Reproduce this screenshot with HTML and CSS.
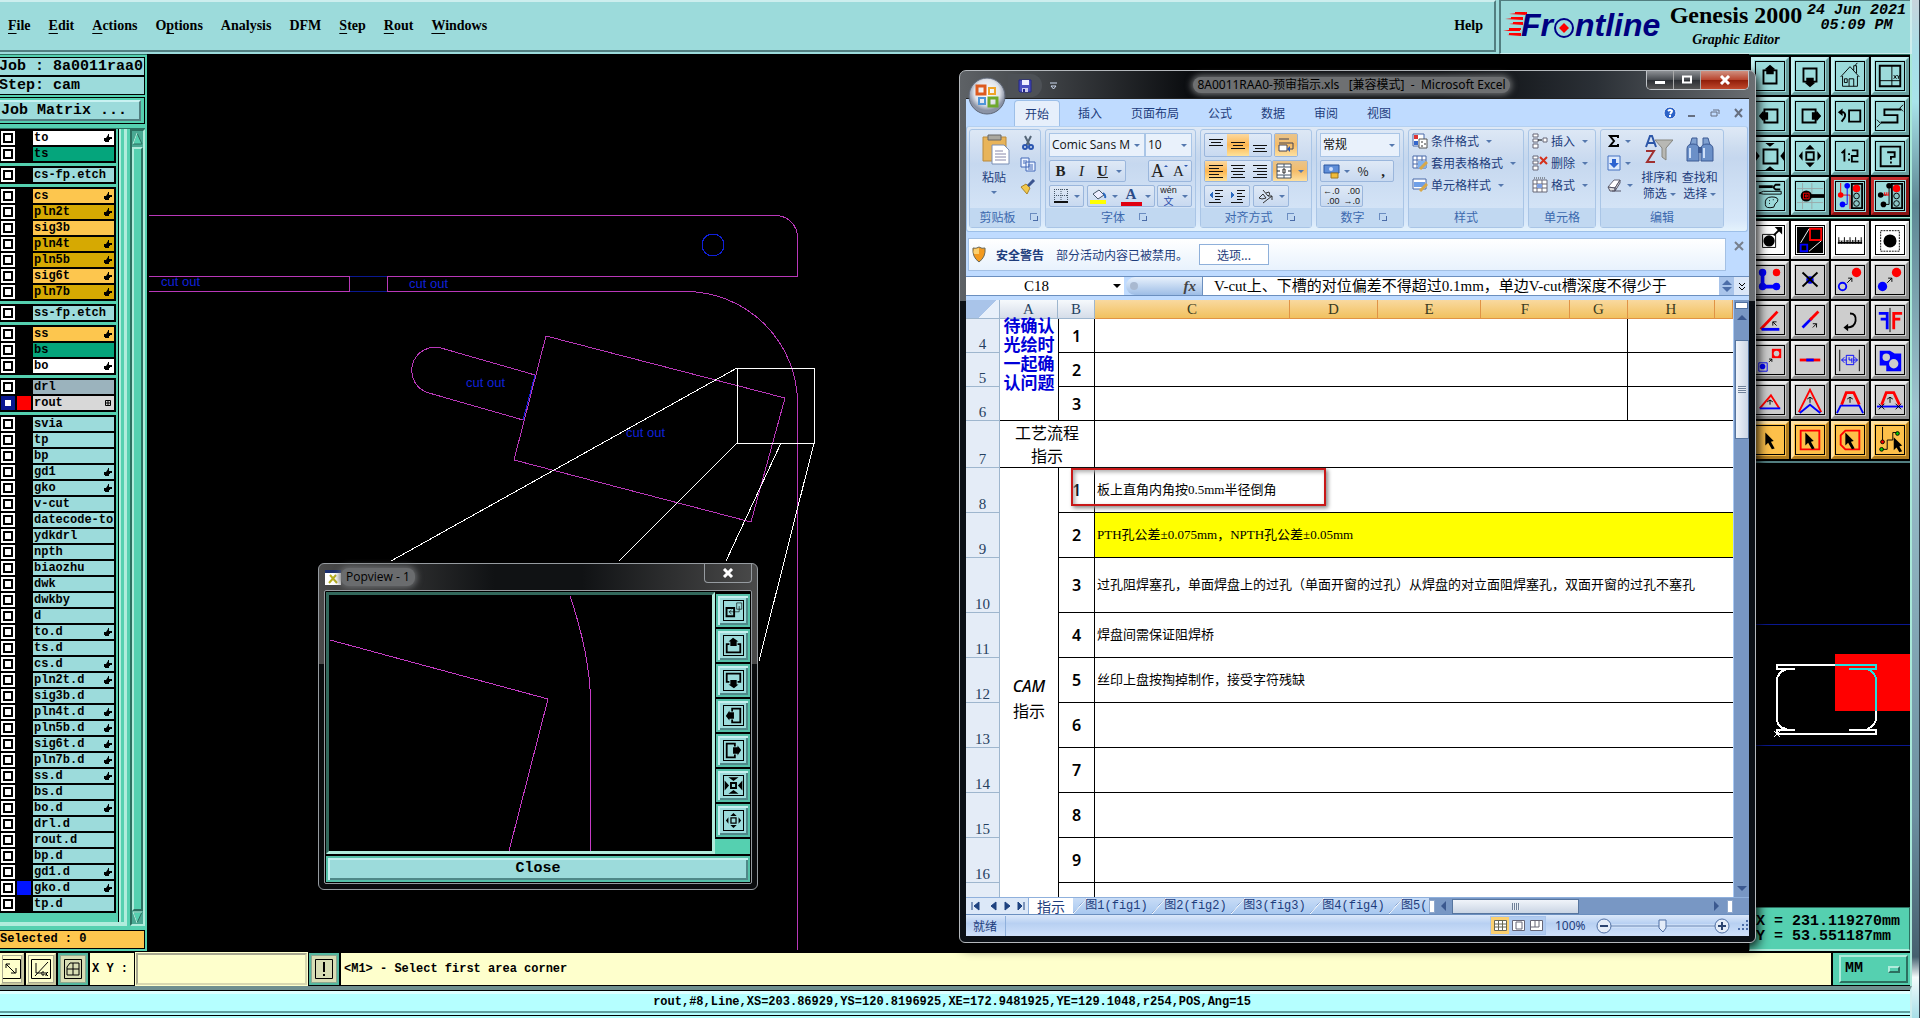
FILE: index.html
```html
<!DOCTYPE html>
<html lang="zh-CN">
<head>
<meta charset="utf-8">
<title>Genesis 2000 Graphic Editor</title>
<link rel="stylesheet" href="styles.css">
</head>
<body>
<svg class="defs" aria-hidden="true">
  <symbol id="hand" viewBox="0 0 8 8"><path d="M0 4h2l2-3V0h1v3h3v2H6v1H5v2H1V7H0z"/></symbol>
  <symbol id="grid4" viewBox="0 0 8 8"><path d="M1.500 1.500h5v5h-5zM1 4h6M4 1v6" fill="none" stroke="#000"/></symbol>
  <symbol id="pan" viewBox="0 0 30 30"><path d="M12 9H8v14h14V9h-4" fill="none" stroke="#000" stroke-width="2"/><path d="M15 3l6 5h-2v5h-8V8H9z"/></symbol>
  <symbol id="panwide" viewBox="0 0 21 21"><path d="M6 9H3v9h15V9h-3" fill="none" stroke="#000" stroke-width="2"/><path d="M10 2l6 4h-2v5H7V6H5z"/></symbol>
  <symbol id="house" viewBox="0 0 30 30"><path d="M5 16L15 5l10 11M7 15v11h16V15M14 26v-8h5v8M9 18h3v4H9zM19 9V4h3v8M21 4c0-3 2-2 2-3" fill="none" stroke="#000"/></symbol>
  <symbol id="winxy" viewBox="0 0 30 30"><path d="M4 4h22v22H4z" fill="none" stroke="#000" stroke-width="2"/><path d="M17 4v22M4 20h22M19 14l3 4m0-4l-3 4M23 14l1 2 2-2m-2 2v2" fill="none" stroke="#000"/></symbol>
  <symbol id="prev" viewBox="0 0 30 30"><path d="M14 9h12v12H14z" fill="none" stroke="#000" stroke-width="2"/><path d="M4 11h4q3 2 1 6l-3 4" fill="none" stroke="#000" stroke-width="2"/><path d="M2 11l5-4v8z"/></symbol>
  <symbol id="snake" viewBox="0 0 30 30"><path d="M27 8H9v6h14v8H5" fill="none" stroke="#000" stroke-width="2"/><path d="M25 7l4-4m-3 4l3 3M1 19l4 4-4 4" fill="none" stroke="#000"/></symbol>
  <symbol id="zoomin" viewBox="0 0 30 30"><path d="M8 8h15v15H8z" fill="none" stroke="#000" stroke-width="2"/><path d="M15 5l-5-4h10zM15 26l-5 4h10zM4 15l-4-5v10zM26 15l4-5v10z"/></symbol>
  <symbol id="shrink" viewBox="0 0 30 30"><path d="M11 11h8v8h-8z" fill="none" stroke="#000" stroke-width="3"/><path d="M15 8l-8-6h16zM15 22l-8 6h16zM8 15L1 7v16zM22 15l7-8v16z"/></symbol>
  <symbol id="zoomout" viewBox="0 0 30 30"><path d="M11 11h8v8h-8z" fill="none" stroke="#000" stroke-width="2"/><path d="M15 3l5 5H10zM15 27l5-5H10zM3 15l4-5v10zM27 15l-4-5v10z"/></symbol>
  <symbol id="onetwo" viewBox="0 0 30 30"><path d="M6 12l3-3v12M14 12v2m0 4v2M17 9h6v6h-6v6h7" fill="none" stroke="#000" stroke-width="2"/></symbol>
  <symbol id="help" viewBox="0 0 30 30"><path d="M5 5h21v21H5z" fill="none" stroke="#000" stroke-width="2"/><path d="M12 11h8v5h-4v3m0 2v2" fill="none" stroke="#000" stroke-width="2"/></symbol>
  <symbol id="tools" viewBox="0 0 30 30"><path d="M3 5h15" stroke="#000" stroke-width="3"/><path d="M26 3h-5q-4 3 0 5h5" fill="none" stroke="#000" stroke-width="2"/><path d="M3 12l5-2h19v3H8zM10 24q-1-8 7-8 8 0 6 5-3 2-4 6-9 2-9-3zM14 20h1m3-1h1m-5 4h1" fill="none" stroke="#000"/></symbol>
  <symbol id="snap" viewBox="0 0 30 30"><path d="M7 1v28M17 1v28M1 7h28M1 22h28" stroke="#9aa9a9"/><circle cx="11" cy="15" r="6"/><path d="M14 15h16" stroke="#000" stroke-width="4"/><path d="M8 12h6v6H8zM10 14h2v2h-2z" fill="none" stroke="red"/></symbol>
  <symbol id="light" viewBox="0 0 30 30"><path d="M17 2h11v26H17z" fill="#8cc5c5" stroke="#000" stroke-width="2"/><circle cx="22" cy="7" r="4" fill="red"/><circle cx="22" cy="15" r="3" fill="none" stroke="#000"/><circle cx="22" cy="23" r="3" fill="none" stroke="#000"/></symbol>
  <symbol id="net1" viewBox="0 0 30 30"><use href="#light"/><path d="M5 1v13h10v15" fill="none" stroke="red"/><circle cx="5" cy="14" r="3" fill="red"/><path d="M12 4v20H6" fill="none" stroke="#00f"/><circle cx="12" cy="4" r="3" fill="#00f"/><circle cx="7" cy="24" r="3" fill="#00f"/></symbol>
  <symbol id="net2" viewBox="0 0 30 30"><use href="#light"/><path d="M14 4v20H8M5 14h6" fill="none" stroke="#000"/><circle cx="14" cy="4" r="3"/><circle cx="5" cy="14" r="3"/><circle cx="8" cy="24" r="3"/><path d="M9 11v3m2-3v3m2-3v3M9 14h5" stroke="red"/></symbol>
  <symbol id="select1" viewBox="0 0 30 30"><path d="M7 9h14v14H7z" fill="none" stroke="#000"/><circle cx="14" cy="16" r="6"/><path d="M19 10l7-7" stroke="#000" stroke-width="2"/><path d="M20 1h8v8z"/></symbol>
  <symbol id="popv" viewBox="0 0 30 30"><path d="M1 1h28v28H1z"/><path d="M15 3h12v12H15z" fill="none" stroke="red" stroke-width="2"/><path d="M5 20h7v7H5z" fill="none" stroke="#00f" stroke-width="2"/><path d="M5 18L14 3M14 27l13-11" stroke="#fff"/></symbol>
  <symbol id="ruler" viewBox="0 0 30 30"><path d="M3 19V12M6 16v3M9 12v7M12 15v4M15 12v7M18 15v4M21 12v7M24 15v4M27 12v7" stroke="#000"/><path d="M3 16h25" stroke="#000" stroke-dasharray="1 1"/><path d="M2 18h26" stroke="#000" stroke-width="2"/></symbol>
  <symbol id="dashpad" viewBox="0 0 30 30"><path d="M5 5h20v22H5z" fill="none" stroke="#000" stroke-dasharray="2 1"/><circle cx="15" cy="16" r="7"/></symbol>
  <symbol id="chain" viewBox="0 0 30 30"><path d="M7 7v15h15" fill="none" stroke="#00f" stroke-width="4"/><circle cx="7" cy="7" r="4" fill="#00f"/><circle cx="7" cy="22" r="4" fill="#00f"/><circle cx="22" cy="22" r="4" fill="#00f"/><circle cx="22" cy="7" r="4" fill="red"/></symbol>
  <symbol id="del" viewBox="0 0 30 30"><circle cx="15" cy="15" r="4" fill="#00f"/><path d="M7 7l16 15M23 7L7 22" stroke="#000" stroke-width="2"/></symbol>
  <symbol id="copy" viewBox="0 0 30 30"><circle cx="7" cy="22" r="4" fill="none" stroke="#00f" stroke-width="2"/><circle cx="22" cy="7" r="5" fill="red"/><path d="M12 18l5-5m-4 0h4v4" fill="none" stroke="#000"/></symbol>
  <symbol id="move" viewBox="0 0 30 30"><circle cx="7" cy="22" r="5" fill="#00f"/><circle cx="22" cy="7" r="5" fill="red"/><path d="M12 18l5-5m-4 0h4v4" fill="none" stroke="#000"/></symbol>
  <symbol id="rot" viewBox="0 0 30 30"><path d="M5 25L23 6" stroke="red" stroke-width="3"/><path d="M6 25h19" stroke="#00f" stroke-width="3"/><path d="M22 21l-4-4v4m0-4h4" fill="none" stroke="#000"/></symbol>
  <symbol id="stretch" viewBox="0 0 30 30"><path d="M7 23l10-10" stroke="#00f" stroke-width="3"/><path d="M15 15l9-9" stroke="red" stroke-width="3"/><path d="M18 23l4-4m-4 0h4v4" fill="none" stroke="#000"/></symbol>
  <symbol id="turn" viewBox="0 0 30 30"><path d="M15 8q7 0 6 8-1 7-9 7" fill="none" stroke="#000" stroke-width="2"/><path d="M13 19v8l-5-4z"/></symbol>
  <symbol id="mirror" viewBox="0 0 30 30"><path d="M15 2v26" stroke="#000"/><path d="M3 8h9v17M5 14h7" fill="none" stroke="#00f" stroke-width="3"/><path d="M28 8h-9v17M26 14h-7" fill="none" stroke="red" stroke-width="3"/></symbol>
  <symbol id="resize" viewBox="0 0 30 30"><path d="M3 18h9v9H3z" fill="none" stroke="#00f"/><circle cx="7" cy="22" r="3" fill="#00f"/><path d="M17 3h10v10H17z" fill="red"/><circle cx="22" cy="8" r="3" fill="#ccc"/><path d="M14 17l3-3m-3 0h3v3" fill="none" stroke="#000"/></symbol>
  <symbol id="seg" viewBox="0 0 30 30"><path d="M4 15h22" stroke="red" stroke-width="3"/><path d="M11 15h8" stroke="#00f" stroke-width="3"/></symbol>
  <symbol id="space" viewBox="0 0 30 30"><path d="M4 4v23M25 4v23" stroke="#000"/><path d="M11 10h8v10h-8zM6 15h5m8 0h4M9 12l-3 3 3 3M20 12l3 3-3 3M14 12v3h3v-2m0 2v3" fill="none" stroke="#00f"/></symbol>
  <symbol id="shapes" viewBox="0 0 30 30"><path d="M4 5h11l5 3h7v19H11v-6H4z" fill="#00f"/><circle cx="11" cy="12" r="4" fill="#ccc"/><circle cx="19" cy="19" r="5" fill="#ccc"/></symbol>
  <symbol id="tri" viewBox="0 0 30 30"><path d="M4 24L16 10l9 14" fill="none" stroke="red" stroke-width="2"/><path d="M4 24h22" stroke="#00f" stroke-width="2"/><path d="M15 20v-5m-3 2l3-2 3 2" fill="none" stroke="#000"/></symbol>
  <symbol id="tri2" viewBox="0 0 30 30"><path d="M3 28L15 4l12 24" fill="none" stroke="red" stroke-width="2"/><path d="M4 29l11-9 11 9" fill="none" stroke="#00f" stroke-width="2"/><path d="M15 18v-6m-3 2l3-2 3 2" fill="none" stroke="#000"/></symbol>
  <symbol id="trap" viewBox="0 0 30 30"><path d="M6 20l5-13h8l6 13" fill="none" stroke="red" stroke-width="3"/><path d="M1 29l4-8h20l4 8" fill="none" stroke="#00f" stroke-width="2"/><path d="M15 18v-6m-3 2l3-2 3 2" fill="none" stroke="#000"/></symbol>
  <symbol id="trap2" viewBox="0 0 30 30"><path d="M6 20l5-13h8l6 13" fill="none" stroke="red" stroke-width="3"/><path d="M1 22h28" stroke="#00f" stroke-width="2"/><path d="M3 19l6 6m0-6l-6 6M21 19l6 6m0-6l-6 6M15 18v-6m-3 2l3-2 3 2" fill="none" stroke="#000"/></symbol>
  <symbol id="cur" viewBox="0 0 30 30"><path d="M10 7l9 9-3 1 4 7-3 1-4-7-3 3z"/></symbol>
  <symbol id="cur2" viewBox="0 0 30 30"><path d="M5 5h20v20H5z" fill="none" stroke="red" stroke-width="2"/><use href="#cur"/></symbol>
  <symbol id="cur3" viewBox="0 0 30 30"><path d="M10 5h15v20H10l-5-5V10z" fill="none" stroke="red" stroke-width="2"/><use href="#cur"/></symbol>
  <symbol id="cur4" viewBox="0 0 30 30"><path d="M7 1v14M6 25h6V15h6V7h5" fill="none" stroke="#000"/><circle cx="23" cy="8" r="2" fill="#0c0" stroke="#000"/><circle cx="6" cy="25" r="2" fill="#0c0" stroke="#000"/><circle cx="7" cy="17" r="2" fill="red" stroke="#000"/><path d="M19 12l9 9-3 1 3 5-3 1-3-5-3 3z"/></symbol>
  <symbol id="popback" viewBox="0 0 30 30"><path d="M4 11h12v13H4z" fill="none" stroke="#000" stroke-width="3"/><path d="M20 3h8v10h-8zM8 17h16V8M12 14l-4 3 4 4" fill="none" stroke="#000"/></symbol>
</svg>

<div class="desktop">
<div class="app">
  <header class="top">
    <nav class="menubar">
      <a href="#"><u>F</u>ile</a><a href="#"><u>E</u>dit</a><a href="#"><u>A</u>ctions</a><a href="#">O<u>p</u>tions</a><a href="#">Analysis</a><a href="#">DFM</a><a href="#"><u>S</u>tep</a><a href="#"><u>R</u>out</a><a href="#"><u>W</u>indows</a>
      <a class="menu-help" href="#">Help</a>
    </nav>
    <div class="brand">
      <svg class="logo" width="166" height="48" role="img" aria-label="Frontline">
        <path d="M8 13l18-2v3zM4 18l18-2v3zM8 23l14-2v3zM2 30l17-3v3zM6 34l14-2v3z" fill="#f00"/><path d="M14 12h10M10 17h12M12 22h10M8 28h12M8 33h12" stroke="#f00" stroke-width="2"/>
        <text x="20" y="35" class="logo-text">Fr</text><text x="74" y="35" class="logo-text">ntline</text>
        <circle cx="63" cy="27" r="9" fill="none" stroke="#008" stroke-width="2"/><path d="M63 22l5 5-5 5-5-5z" fill="#f00"/>
      </svg>
      <div class="product"><strong>Genesis 2000</strong><em>Graphic Editor</em></div>
      <time class="clock">24 Jun 2021<br>05:09 PM</time>
    </div>
  </header>

  <main class="work">
    <aside class="side">
      <div class="job">Job : 8a0011raa0</div>
      <div class="job">Step: cam</div>
      <div class="matrix"><button type="button">Job Matrix ...</button></div>
      <div class="list">
        <div class="layers">
          <div class="group">
            <label class="layer white"><input type="checkbox"><i></i><span>to</span><svg><use href="#hand"/></svg></label>
            <label class="layer green"><input type="checkbox"><i></i><span>ts</span></label>
          </div>
          <div class="group">
            <label class="layer"><input type="checkbox"><i></i><span>cs-fp.etch</span></label>
          </div>
          <div class="group">
            <label class="layer orange"><input type="checkbox"><i></i><span>cs</span><svg><use href="#hand"/></svg></label>
            <label class="layer gold"><input type="checkbox"><i></i><span>pln2t</span><svg><use href="#hand"/></svg></label>
            <label class="layer orange"><input type="checkbox"><i></i><span>sig3b</span></label>
            <label class="layer gold"><input type="checkbox"><i></i><span>pln4t</span><svg><use href="#hand"/></svg></label>
            <label class="layer gold"><input type="checkbox"><i></i><span>pln5b</span><svg><use href="#hand"/></svg></label>
            <label class="layer orange"><input type="checkbox"><i></i><span>sig6t</span><svg><use href="#hand"/></svg></label>
            <label class="layer gold"><input type="checkbox"><i></i><span>pln7b</span><svg><use href="#hand"/></svg></label>
          </div>
          <div class="group">
            <label class="layer"><input type="checkbox"><i></i><span>ss-fp.etch</span></label>
          </div>
          <div class="group">
            <label class="layer orange"><input type="checkbox"><i></i><span>ss</span><svg><use href="#hand"/></svg></label>
            <label class="layer green"><input type="checkbox"><i></i><span>bs</span></label>
            <label class="layer white"><input type="checkbox"><i></i><span>bo</span><svg><use href="#hand"/></svg></label>
          </div>
          <div class="group">
            <label class="layer steel"><input type="checkbox"><i></i><span>drl</span></label>
            <label class="layer grey"><input type="checkbox" checked><i class="red"></i><span>rout</span><svg><use href="#grid4"/></svg></label>
          </div>
          <div class="group">
            <label class="layer"><input type="checkbox"><i></i><span>svia</span></label>
            <label class="layer"><input type="checkbox"><i></i><span>tp</span></label>
            <label class="layer"><input type="checkbox"><i></i><span>bp</span></label>
            <label class="layer"><input type="checkbox"><i></i><span>gd1</span><svg><use href="#hand"/></svg></label>
            <label class="layer"><input type="checkbox"><i></i><span>gko</span><svg><use href="#hand"/></svg></label>
            <label class="layer"><input type="checkbox"><i></i><span>v-cut</span></label>
            <label class="layer"><input type="checkbox"><i></i><span>datecode-to</span></label>
            <label class="layer"><input type="checkbox"><i></i><span>ydkdrl</span></label>
            <label class="layer"><input type="checkbox"><i></i><span>npth</span></label>
            <label class="layer"><input type="checkbox"><i></i><span>biaozhu</span></label>
            <label class="layer"><input type="checkbox"><i></i><span>dwk</span></label>
            <label class="layer"><input type="checkbox"><i></i><span>dwkby</span></label>
            <label class="layer"><input type="checkbox"><i></i><span>d</span></label>
            <label class="layer"><input type="checkbox"><i></i><span>to.d</span><svg><use href="#hand"/></svg></label>
            <label class="layer"><input type="checkbox"><i></i><span>ts.d</span></label>
            <label class="layer"><input type="checkbox"><i></i><span>cs.d</span><svg><use href="#hand"/></svg></label>
            <label class="layer"><input type="checkbox"><i></i><span>pln2t.d</span><svg><use href="#hand"/></svg></label>
            <label class="layer"><input type="checkbox"><i></i><span>sig3b.d</span></label>
            <label class="layer"><input type="checkbox"><i></i><span>pln4t.d</span><svg><use href="#hand"/></svg></label>
            <label class="layer"><input type="checkbox"><i></i><span>pln5b.d</span><svg><use href="#hand"/></svg></label>
            <label class="layer"><input type="checkbox"><i></i><span>sig6t.d</span><svg><use href="#hand"/></svg></label>
            <label class="layer"><input type="checkbox"><i></i><span>pln7b.d</span><svg><use href="#hand"/></svg></label>
            <label class="layer"><input type="checkbox"><i></i><span>ss.d</span><svg><use href="#hand"/></svg></label>
            <label class="layer"><input type="checkbox"><i></i><span>bs.d</span></label>
            <label class="layer"><input type="checkbox"><i></i><span>bo.d</span><svg><use href="#hand"/></svg></label>
            <label class="layer"><input type="checkbox"><i></i><span>drl.d</span></label>
            <label class="layer"><input type="checkbox"><i></i><span>rout.d</span></label>
            <label class="layer"><input type="checkbox"><i></i><span>bp.d</span></label>
            <label class="layer"><input type="checkbox"><i></i><span>gd1.d</span><svg><use href="#hand"/></svg></label>
            <label class="layer"><input type="checkbox"><i class="blue"></i><span>gko.d</span><svg><use href="#hand"/></svg></label>
            <label class="layer"><input type="checkbox"><i></i><span>tp.d</span></label>
          </div>
        </div>
        <div class="mscroll">
          <svg width="11" height="16"><path d="M1 13L5 2l5 11z" fill="#55d0b0" stroke="#2c6f60"/><path d="M1 13L5 2" stroke="#b5f5e2"/></svg>
          <div class="mthumb"></div>
          <svg width="11" height="13"><path d="M1 1h9L5 12z" fill="#55d0b0" stroke="#2c6f60"/><path d="M5 12L1 1h9" fill="none" stroke="#b5f5e2"/></svg>
        </div>
      </div>
      <div class="selected">Selected : 0</div>
    </aside>

    <svg class="canvas" role="img" aria-label="Board outline">
      <g transform="translate(-147 -54)" fill="none" stroke="#b938b9" shape-rendering="crispEdges">
        <path d="M149 215.500H776a22 22 0 0 1 21.500 22V276.500H387.500V291.500H686A112 112 0 0 1 797.500 403V950"/>
        <path d="M149 276.500H350M149 291.500H350M349.500 276v16"/>
        <path d="M350 276.500h37M350 291.500h37" stroke="#0a1890"/>
        <path d="M546 336L785 398 751 522 514 460z"/>
        <path d="M535 375L441 348A23 23 0 0 0 429 393L523 420"/>
        <path d="M535 375L523 420" stroke="#1020d8"/>
        <circle cx="713" cy="245" r="11" stroke="#1020d8"/>
        <path d="M737.500 368.500h77v75h-77z" stroke="#fff"/>
        <path d="M737 368L391 561M737 443L619 561M781 443L726 561M814 443L759 661" stroke="#fff"/>
        <g class="cut"><text x="161" y="286">cut out</text><text x="409" y="288">cut out</text><text x="466" y="387">cut out</text><text x="626" y="437">cut out</text></g>
      </g>
    </svg>

    <aside class="right">
      <div class="tools">
        <button type="button"><svg><use href="#pan"/></svg></button><button type="button"><svg class="r180"><use href="#pan"/></svg></button><button type="button"><svg><use href="#house"/></svg></button><button type="button"><svg><use href="#winxy"/></svg></button>
        <button type="button"><svg class="r270"><use href="#pan"/></svg></button><button type="button"><svg class="r90"><use href="#pan"/></svg></button><button type="button"><svg><use href="#prev"/></svg></button><button type="button"><svg><use href="#snake"/></svg></button>
        <button type="button"><svg><use href="#zoomin"/></svg></button><button type="button"><svg><use href="#zoomout"/></svg></button><button type="button"><svg><use href="#onetwo"/></svg></button><button type="button"><svg><use href="#help"/></svg></button>
        <button type="button"><svg><use href="#tools"/></svg></button><button type="button"><svg><use href="#snap"/></svg></button><button type="button" class="crimson"><svg><use href="#net1"/></svg></button><button type="button" class="crimson"><svg><use href="#net2"/></svg></button>
      </div>
      <div class="tools plain">
        <button type="button" class="paper"><svg><use href="#select1"/></svg></button><button type="button" class="paper"><svg><use href="#popv"/></svg></button><button type="button" class="paper"><svg><use href="#ruler"/></svg></button><button type="button" class="paper"><svg><use href="#dashpad"/></svg></button>
        <button type="button"><svg><use href="#chain"/></svg></button><button type="button"><svg><use href="#del"/></svg></button><button type="button"><svg><use href="#copy"/></svg></button><button type="button"><svg><use href="#move"/></svg></button>
        <button type="button"><svg><use href="#rot"/></svg></button><button type="button"><svg><use href="#stretch"/></svg></button><button type="button"><svg><use href="#turn"/></svg></button><button type="button"><svg><use href="#mirror"/></svg></button>
        <button type="button"><svg><use href="#resize"/></svg></button><button type="button"><svg><use href="#seg"/></svg></button><button type="button"><svg><use href="#space"/></svg></button><button type="button"><svg><use href="#shapes"/></svg></button>
        <button type="button"><svg><use href="#tri"/></svg></button><button type="button"><svg><use href="#tri2"/></svg></button><button type="button"><svg><use href="#trap"/></svg></button><button type="button"><svg><use href="#trap2"/></svg></button>
        <button type="button" class="amber"><svg><use href="#cur"/></svg></button><button type="button" class="amber"><svg><use href="#cur2"/></svg></button><button type="button" class="amber"><svg><use href="#cur3"/></svg></button><button type="button" class="amber"><svg><use href="#cur4"/></svg></button>
      </div>
      <svg class="mini" role="img" aria-label="Board overview">
        <g transform="translate(-1748 -463)" fill="none" shape-rendering="crispEdges">
          <path d="M1750 624.500h160M1750 745.500h160" stroke="#0a1890"/>
          <path d="M1834 654h77v57h-77z" fill="#f00"/>
          <path d="M1834 665H1776v4h18M1786 669q-10 3-10 12v37q0 10 10 11M1794 729.500h-18v4h99v-4h-27M1866 729q9-3 9-12V711" stroke="#fff" stroke-width="2"/>
          <path d="M1834 665h41v4h-27M1866 669q9 3 9 12v30" stroke="#20e0e0" stroke-width="2"/>
          <path d="M1773 731l6 6m0-6l-6 6" stroke="#fff"/>
        </g>
      </svg>
      <output class="coords">X = 231.119270mm<br>Y = 53.551187mm</output>
    </aside>
  </main>

  <section class="prompt">
    <button type="button" class="pbtn"><svg width="18" height="20"><path d="M0 .5h17.500v19H0M3 5l9 9M8 14h5V9M3 9V5h4" fill="none" stroke="#000"/></svg></button>
    <button type="button" class="pbtn"><svg width="20" height="20"><path d="M.5.500h19v19H.5zM5 4v10h6M17 3L4 17" fill="none" stroke="#000"/><path d="M11 13h2v3h-2zM15 13v4m2-4l-2 2 2 2" fill="none" stroke="#000"/></svg></button>
    <button type="button" class="pbtn teal"><svg width="18" height="20"><path d="M.5.500h17v19H.5zM3 8l3-4h9v12H3zM9 4v12M3 10h12" fill="none" stroke="#000"/></svg></button>
    <label class="xy" for="xy">X Y :</label>
    <input id="xy" class="xyin" type="text">
    <button type="button" class="pbtn teal"><svg width="18" height="20"><path d="M.5.500h17v19H.5z" fill="none" stroke="#000"/><path d="M9 3v10m0 2v2" stroke="#000" stroke-width="2"/></svg></button>
    <p class="msg">&lt;M1&gt; - Select first area corner</p>
    <div class="unitbox"><button type="button" class="unit">MM<i></i></button></div>
  </section>
  <footer class="status">rout,#8,Line,XS=203.86929,YS=120.8196925,XE=172.9481925,YE=129.1048,r254,POS,Ang=15</footer>
</div>
<div class="edge"></div>

<section class="popview">
  <header><svg width="16" height="15"><path d="M0 0h16v15H0z" fill="#fff"/><path d="M0 0h16v3H0z" fill="#1b2f6e"/><path d="M5 5l7 8M11 5l-7 8" stroke="#b8b020" stroke-width="2"/></svg><h2>Popview - 1</h2><button type="button" aria-label="Close window"><svg width="12" height="10"><path d="M2 1l8 8M10 1L2 9" stroke="#fff" stroke-width="3"/></svg></button></header>
  <div class="pv-inner">
    <div class="pv-main">
      <svg class="pv-canvas" role="img" aria-label="Corner detail"><path d="M1 45L219 104 180 256M241 1Q261 60 261.500 106V256" fill="none" stroke="#c63cc6" shape-rendering="crispEdges"/></svg>
      <div class="pv-tools">
        <button type="button"><svg><use href="#popback"/></svg></button>
        <button type="button"><svg><use href="#panwide"/></svg></button>
        <button type="button"><svg class="r180"><use href="#panwide"/></svg></button>
        <button type="button"><svg class="r270"><use href="#panwide"/></svg></button>
        <button type="button"><svg class="r90"><use href="#panwide"/></svg></button>
        <button type="button"><svg><use href="#shrink"/></svg></button>
        <button type="button"><svg><use href="#zoomout"/></svg></button>
      </div>
    </div>
    <button type="button" class="pv-close">Close</button>
  </div>
</section>

<section class="excel">
  <header class="x-title">
    <div class="qat"><svg width="14" height="14"><path d="M1 1h12v12H2l-1-1z" fill="#4a4fc0" stroke="#22268a"/><path d="M4 1h7v5H4z" fill="#eef"/><path d="M4 9h6v4H4z" fill="#cce"/><path d="M5 10h2v3H5z" fill="#22268a"/></svg></div>
    <svg class="qat-more" width="7" height="8"><path d="M0 1h7M1 4h5L3.500 7z" stroke="#ccd8ee" fill="none"/></svg>
    <h1><span>8A0011RAA0-预审指示.xls&nbsp;&nbsp; [兼容模式]&nbsp; -&nbsp; Microsoft Excel</span></h1>
    <div class="wbtns"><button type="button" aria-label="Minimize"><svg width="12" height="10"><path d="M1 6h10v3H1z" fill="#fff"/></svg></button><button type="button" aria-label="Maximize"><svg width="12" height="10"><path d="M2 1.500h8v6H2z" fill="none" stroke="#fff" stroke-width="2"/></svg></button><button type="button" class="close" aria-label="Close"><svg width="12" height="10"><path d="M2 1l8 8M10 1L2 9" stroke="#fff" stroke-width="3"/></svg></button></div>
  </header>
  <svg class="orb" width="38" height="38"><defs><radialGradient id="og" cx=".5" cy=".4"><stop offset="0" stop-color="#fff"/><stop offset=".7" stop-color="#dfe3ea"/><stop offset="1" stop-color="#8b93a5"/></radialGradient></defs><circle cx="19" cy="19" r="18" fill="url(#og)" stroke="#5f6878"/><g fill="none" stroke-width="3"><path d="M17 17H9V9h8z" stroke="#dd5a1e"/><path d="M21 17v-6h6v6z" stroke="#efa52a" stroke-width="2"/><path d="M17 21v6h-6v-6z" stroke="#4f95d8" stroke-width="2"/><path d="M21 21h8v8h-8z" stroke="#6fa92c"/></g></svg>

  <div class="x-body">
    <nav class="tabs">
      <button type="button" class="on">开始</button><button type="button">插入</button><button type="button">页面布局</button><button type="button">公式</button><button type="button">数据</button><button type="button">审阅</button><button type="button">视图</button>
      <span class="mdi"><svg width="14" height="14"><circle cx="7" cy="7" r="6" fill="#2b62c8" stroke="#e8f0fc"/><path d="M5 5q2-2 4 0 0 1-2 3m0 1v2" fill="none" stroke="#fff" stroke-width="2"/></svg><svg width="9" height="10"><path d="M1 8h7" stroke="#666f80" stroke-width="2"/></svg><svg width="10" height="10"><path d="M1 4h6v4H1zM3 2h6v4" fill="none" stroke="#666f80"/></svg><svg width="9" height="10"><path d="M1 1l7 8M8 1L1 9" stroke="#666f80" stroke-width="2"/></svg></span>
    </nav>

    <div class="ribbon">
      <div class="rg clip">
        <div class="rb">
          <button type="button" class="big"><svg width="28" height="32"><path d="M1 4h23v24H1z" fill="#e8b45a" stroke="#b98a3c"/><path d="M6 2h13v5H6z" fill="#aaa89f" stroke="#666"/><path d="M10 12h12l5 5v14H10z" fill="#fff" stroke="#7a8fb5"/><path d="M13 18h8m-8 3h11m-11 3h11m-11 3h11" stroke="#88a"/></svg>粘贴<i class="caret"></i></button>
          <div class="stack"><button type="button" aria-label="剪切"><svg width="16" height="16"><path d="M5 1l5 10M11 1L6 11" stroke="#567" stroke-width="2"/><circle cx="5" cy="12" r="2" fill="none" stroke="#2b56b0" stroke-width="2"/><circle cx="11" cy="12" r="2" fill="none" stroke="#2b56b0" stroke-width="2"/></svg></button><button type="button" aria-label="复制"><svg width="16" height="16"><path d="M1 1h8v9H1zM6 5h9v9H6z" fill="#eaf2ff" stroke="#4268b8"/><path d="M3 4h4M3 6h3M8 8h5m-5 2h5m-5 2h5" stroke="#4268b8"/></svg></button><button type="button" aria-label="格式刷"><svg width="16" height="16"><path d="M1 8l5-3 4 4-3 6z" fill="#f2c84b" stroke="#a8842e"/><path d="M8 7l6-6" stroke="#3c5590" stroke-width="3"/></svg></button></div>
        </div>
        <h3>剪贴板<b></b></h3>
      </div>
      <div class="rg font">
        <div class="rb col">
          <div class="row"><span class="combo c1"><select aria-label="字体"><option>Comic Sans M</option></select><i class="caret"></i></span><span class="combo c2"><select aria-label="字号"><option>10</option></select><i class="caret"></i></span></div>
          <div class="row"><span class="seg"><button type="button" class="serif"><b>B</b></button><button type="button" class="serif"><em>I</em></button><button type="button" class="serif"><u><b>U</b></u></button><button type="button" class="mini-caret"><i class="caret"></i></button></span><span class="seg"><button type="button" class="serif big-a"><span>A<i class="tick up"></i></span></button><button type="button" class="serif"><span>A<i class="tick"></i></span></button></span></div>
          <div class="row"><span class="seg"><button type="button" aria-label="边框"><svg width="14" height="14"><path d="M.5 0v12M7 0v12M13.500 0v12M0 .5h14M0 6.500h14" stroke="#456" stroke-dasharray="1 1"/><path d="M0 13h14" stroke="#111" stroke-width="2"/></svg></button><button type="button" class="mini-caret"><i class="caret"></i></button></span><span class="seg"><button type="button" aria-label="填充"><svg width="17" height="16"><path d="M3 6l6-4 5 5-6 4z" fill="#eef" stroke="#456"/><path d="M13 5q3 2 2 5" fill="none" stroke="#2b6ac0" stroke-width="2"/><path d="M0 12h16v4H0z" fill="#ff0"/></svg></button><button type="button" class="mini-caret"><i class="caret"></i></button><button type="button" class="serif under">A</button><button type="button" class="mini-caret"><i class="caret"></i></button></span><span class="seg"><button type="button" class="wen"><small>wén</small><span>文</span></button><button type="button" class="mini-caret"><i class="caret"></i></button></span></div>
        </div>
        <h3>字体<b></b></h3>
      </div>
      <div class="rg align">
        <div class="rb col">
          <div class="row"><span class="seg"><button type="button" aria-label="顶端对齐"><svg class="al"><path d="M1 2h14M3 5h10M1 8h14"/></svg></button><button type="button" class="hot" aria-label="居中"><svg class="al"><path d="M1 5h14M3 8h10M1 11h14"/></svg></button><button type="button" aria-label="底端对齐"><svg class="al"><path d="M1 8h14M3 11h10M1 14h14"/></svg></button></span><span class="seg s2"><button type="button" class="hot2" aria-label="自动换行"><svg width="16" height="16"><path d="M1 2h10M1 6h14v6h-4" fill="none" stroke="#445"/><path d="M1 8h8v6H1z" fill="#fff" stroke="#445"/><path d="M12 9l-3 3 3 3z" fill="#2b56b0"/></svg></button></span></div>
          <div class="row"><span class="seg"><button type="button" class="hot" aria-label="左对齐"><svg class="al"><path d="M1 2h14M1 5h10M1 8h14M1 11h10M1 14h14"/></svg></button><button type="button" aria-label="水平居中"><svg class="al"><path d="M1 2h14M3 5h10M1 8h14M3 11h10M1 14h14"/></svg></button><button type="button" aria-label="右对齐"><svg class="al"><path d="M1 2h14M5 5h10M1 8h14M5 11h10M1 14h14"/></svg></button></span><span class="seg"><button type="button" class="hot2" aria-label="合并"><svg width="16" height="16"><path d="M1 1h14v14H1zM1 4h14M1 12h14M8 1v3m0 8v3" fill="#fff" stroke="#456"/><path d="M1 8h3m8 0h3M7 6h2v4H7z" stroke="#222" fill="none"/></svg></button><button type="button" class="mini-caret hot2"><i class="caret"></i></button></span></div>
          <div class="row start"><span class="seg"><button type="button" aria-label="减少缩进"><svg class="al"><path d="M7 2h8M7 5h5M7 8h8M7 11h5M1 14h12"/><path d="M5 4L1 7l4 3z" fill="#2b6ac0" stroke="none"/></svg></button><button type="button" aria-label="增加缩进"><svg class="al"><path d="M7 2h8M7 5h5M7 8h8M7 11h5M1 14h12"/><path d="M1 4l4 3-4 3z" fill="#2b6ac0" stroke="none"/></svg></button></span><span class="seg"><button type="button" aria-label="方向"><svg width="16" height="16"><path d="M2 10l4-4 3 4-4 1zM6 2l5 6q3-1 1-4l-3 1M6 15L15 8m-4 0h4v4" fill="none" stroke="#333"/></svg></button><button type="button" class="mini-caret"><i class="caret"></i></button></span></div>
        </div>
        <h3>对齐方式<b></b></h3>
      </div>
      <div class="rg num">
        <div class="rb col">
          <div class="row"><span class="combo c3"><select aria-label="数字格式"><option>常规</option></select><i class="caret"></i></span></div>
          <div class="row"><span class="seg"><button type="button" aria-label="货币"><svg width="17" height="16"><path d="M1 2h15v8H1z" fill="#5f8ed8" stroke="#2b56a0"/><circle cx="8" cy="6" r="2" fill="#cfe0ff"/><path d="M8 10h7v5H8z" fill="#f0bc3a" stroke="#a07820"/></svg></button><button type="button" class="mini-caret"><i class="caret"></i></button><button type="button">%</button><button type="button" class="serif"><b>,</b></button></span></div>
          <div class="row"><span class="seg"><button type="button" class="dec"><span>←.0</span><span>.00</span></button><button type="button" class="dec"><span>.00</span><span>→.0</span></button></span></div>
        </div>
        <h3>数字<b></b></h3>
      </div>
      <div class="rg styles">
        <div class="rb lines">
          <button type="button"><svg width="16" height="16"><path d="M1 1h11v12H1z" fill="#fff" stroke="#4868a8"/><path d="M2 2h4v4H2z" fill="#d33"/><path d="M2 8h4v4H2z" fill="#36c"/><path d="M7 6h8v9H7z" fill="#fff" stroke="#555"/><path d="M9 9h2m1 2h2m-5 2h2" stroke="#333"/></svg>条件格式<i class="caret"></i></button>
          <button type="button"><svg width="16" height="16"><path d="M1 1h13v12H1z" fill="#fff" stroke="#4868a8"/><path d="M1 5h13M1 9h13M5 1v12M10 1v12" stroke="#4868a8"/><path d="M6 6h8v7H6z" fill="#7fb0ee"/><path d="M8 14l7-7" stroke="#d8a848" stroke-width="3"/></svg>套用表格格式<i class="caret"></i></button>
          <button type="button"><svg width="16" height="16"><path d="M1 2h13v10H1z" fill="#fff" stroke="#4868a8"/><path d="M2 5h11v5H2z" fill="#6fa0e8"/><path d="M8 14l7-7" stroke="#d8a848" stroke-width="3"/></svg>单元格样式<i class="caret"></i></button>
        </div>
        <h3>样式</h3>
      </div>
      <div class="rg cells">
        <div class="rb lines">
          <button type="button"><svg width="16" height="16"><path d="M1 1h5v3H1zM1 6h5v3H1zM1 11h5v4H1zM11 5h4v4h-4z" fill="#fff" stroke="#667"/><path d="M6 7h4" stroke="#000"/></svg>插入<i class="caret"></i></button>
          <button type="button"><svg width="16" height="16"><path d="M1 1h5v3H1zM1 6h5v3H1zM1 11h5v4H1z" fill="#fff" stroke="#667"/><path d="M8 2l7 7m0-7L8 9" stroke="#d4301c" stroke-width="2"/></svg>删除<i class="caret"></i></button>
          <button type="button"><svg width="16" height="16"><path d="M1 3h14v12H1zM1 7h14M1 11h14M5 3v12M10 3v12" fill="#fff" stroke="#667"/><path d="M5 7h5v4H5z" fill="#7f9fe0"/><path d="M2 1h12" stroke="#444" stroke-dasharray="1 1"/></svg>格式<i class="caret"></i></button>
        </div>
        <h3>单元格</h3>
      </div>
      <div class="rg edit">
        <div class="rb">
          <div class="lines"><button type="button" aria-label="求和"><svg width="14" height="14"><path d="M11 4V2H3l4 5-4 5h8v-2" fill="none" stroke="#000" stroke-width="2"/></svg><i class="caret"></i></button><button type="button" aria-label="填充"><svg width="14" height="16"><path d="M1 1h12v14H1z" fill="#dce9fc" stroke="#4470c0"/><path d="M5 4h4v4h3l-5 5-5-5h3z" fill="#2b62d0"/></svg><i class="caret"></i></button><button type="button" aria-label="清除"><svg width="16" height="14"><path d="M1 9l6-7h6L8 10z" fill="#fff" stroke="#667"/><path d="M1 9l7 1v3H3zM8 10l5-8v3L8 13zM5 13h9" fill="#ddd" stroke="#556"/></svg><i class="caret"></i></button></div>
          <button type="button" class="big two"><svg width="28" height="28"><path d="M1 12L5 1h2l4 11M3 8h6" fill="none" stroke="#2c56a8" stroke-width="2"/><path d="M1 16h8L2 27h8" fill="none" stroke="#a03030" stroke-width="2"/><path d="M10 5h18l-7 8v12l-4-3v-9z" fill="#b8b8b4" stroke="#85857f"/></svg>排序和<span>筛选<i class="caret"></i></span></button>
          <button type="button" class="big two"><svg width="28" height="28"><path d="M4 10l2-7h5v9M24 10l-2-7h-5v9" fill="#7fa0d0" stroke="#3c5a94"/><path d="M1 14q0-5 6-5t6 5v12H1zM15 14q0-5 6-5t6 5v12H15z" fill="#6b90c8" stroke="#3c5a94"/><path d="M12 12h4v6h-4z" fill="#3c5a94"/><path d="M4 13v10M18 13v10" stroke="#cfe0f8" stroke-width="2"/></svg>查找和<span>选择<i class="caret"></i></span></button>
        </div>
        <h3>编辑</h3>
      </div>
    </div>

    <div class="warn">
      <div class="warn-box"><svg width="14" height="17"><path d="M7 1q3 2 6 1 1 9-6 14Q0 11 1 2q3 1 6-1z" fill="#f39a1f" stroke="#6a6a5a"/><path d="M7 2v6H2q-1-2 0-5 3 0 5-1z" fill="#fbd070"/></svg><strong>安全警告</strong><span>部分活动内容已被禁用。</span><button type="button">选项...</button></div>
      <svg width="10" height="10"><path d="M1 1l8 8M9 1L1 9" stroke="#777f8c" stroke-width="2"/></svg>
    </div>

    <div class="fbar">
      <div class="name">C18<i></i></div>
      <div class="fx"><svg width="14" height="14"><circle cx="7" cy="7" r="4" fill="#a9b9d0"/></svg><em>fx</em></div>
      <div class="ftext">V-cut上、下槽的对位偏差不得超过0.1mm，单边V-cut槽深度不得少于</div>
      <div class="spin"><i class="up"></i><i></i></div>
      <div class="expand"><svg width="8" height="9"><path d="M1 1l3 3 3-3M1 5l3 3 3-3" fill="none" stroke="#000"/></svg></div>
    </div>

    <div class="sheet">
      <div class="gridwrap">
        <table class="grid">
          <colgroup><col class="k0"><col class="k1"><col class="k2"><col class="k3"><col class="k4"><col class="k5"><col class="k6"><col class="k7"><col class="k8"><col></colgroup>
          <thead><tr><th class="corner"></th><th>A</th><th>B</th><th class="sel">C</th><th class="sel">D</th><th class="sel">E</th><th class="sel">F</th><th class="sel">G</th><th class="sel">H</th><th class="sel"></th></tr></thead>
          <tbody>
            <tr class="h34"><th>4</th><td rowspan="3" class="pend"><div>待确认<br>光绘时<br>一起确<br>认问题</div></td><td class="n">1</td><td colspan="5" class="t v"></td><td colspan="2"></td></tr>
            <tr class="h34"><th>5</th><td class="n">2</td><td colspan="5" class="t v"></td><td colspan="2"></td></tr>
            <tr class="h34"><th>6</th><td class="n">3</td><td colspan="5" class="t v"></td><td colspan="2"></td></tr>
            <tr class="h45"><th>7</th><td colspan="2" class="flow v">工艺流程<br>指示</td><td colspan="7"></td></tr>
            <tr class="h45"><th>8</th><td rowspan="10" class="cam v"><span>CAM</span><br>指示</td><td class="n">1</td><td colspan="7" class="t">板上直角内角按0.5mm半径倒角</td></tr>
            <tr class="h45"><th>9</th><td class="n">2</td><td colspan="7" class="t yellow">PTH孔公差±0.075mm，NPTH孔公差±0.05mm</td></tr>
            <tr class="h55"><th>10</th><td class="n">3</td><td colspan="7" class="t">过孔阻焊塞孔，单面焊盘上的过孔（单面开窗的过孔）从焊盘的对立面阻焊塞孔，双面开窗的过孔不塞孔</td></tr>
            <tr class="h45"><th>11</th><td class="n">4</td><td colspan="7" class="t">焊盘间需保证阻焊桥</td></tr>
            <tr class="h45"><th>12</th><td class="n">5</td><td colspan="7" class="t">丝印上盘按掏掉制作，接受字符残缺</td></tr>
            <tr class="h45"><th>13</th><td class="n">6</td><td colspan="7" class="t"></td></tr>
            <tr class="h45"><th>14</th><td class="n">7</td><td colspan="7" class="t"></td></tr>
            <tr class="h45"><th>15</th><td class="n">8</td><td colspan="7" class="t"></td></tr>
            <tr class="h45"><th>16</th><td class="n">9</td><td colspan="7" class="t"></td></tr>
            <tr class="h45"><th></th><td class="n">10</td><td colspan="7" class="t"></td></tr>
          </tbody>
        </table>
        <div class="mark"></div>
      </div>
      <div class="vs"><div class="split"></div><i class="up"></i><div class="vthumb"></div><i class="down"></i></div>
    </div>

    <div class="sheettabs">
      <div class="navs"><svg width="60" height="10"><path d="M4 1v8M11 1L6 5l5 4zM28 1l-5 4 5 4zM37 1l5 4-5 4zM50 1l4 4-4 4zM56 1v8" fill="#1e4280" stroke="#1e4280"/></svg></div>
      <div class="tabstrip"><a href="#" class="cur">指示</a><a href="#">图1(fig1)</a><a href="#">图2(fig2)</a><a href="#">图3(fig3)</a><a href="#">图4(fig4)</a><a href="#">图5(</a></div>
      <div class="hs"><b></b><i class="lt"></i><div class="hthumb"></div><span></span><i class="rt"></i><b></b></div>
    </div>
    <div class="xstatus">
      <span class="ready">就绪</span>
      <div class="views"><button type="button" class="on" aria-label="普通"><svg width="13" height="11"><path d="M.5.500h12v10H.5zM0 4h13M0 7h13M4.500 0v11M8.500 0v11" fill="#fff" stroke="#665"/></svg></button><button type="button" aria-label="页面布局"><svg width="13" height="11"><path d="M.5.500h12v10H.5zM4 2h6v7H4z" fill="#fff" stroke="#667"/></svg></button><button type="button" aria-label="分页预览"><svg width="13" height="11"><path d="M.5.500h12v10H.5zM5 0v7m4-7v7M0 7h9" fill="#fff" stroke="#667"/></svg></button></div>
      <span class="pct">100%</span>
      <svg class="zoom" width="136" height="18"><path d="M16 9h104" stroke="#dce9fb" stroke-width="3"/><path d="M16 9h104" stroke="#5f7fb0"/><circle cx="9" cy="9" r="7" fill="#e4ecf8" stroke="#4f6fa4"/><circle cx="127" cy="9" r="7" fill="#e4ecf8" stroke="#4f6fa4"/><path d="M5 9h8M123 9h8M127 5v8" stroke="#2c4470" stroke-width="2"/><path d="M64 3h7v8l-3 4-4-4z" fill="#e4ecf8" stroke="#4f6fa4"/></svg>
      <svg class="grip" width="12" height="12"><path d="M9 1h2M5 5h2m2 0h2M1 9h2m2 0h2m2 0h2" stroke="#4a6ca8" stroke-width="2"/></svg>
    </div>
  </div>
</section>
</div>
</body>
</html>
```

FILE: styles.css
```css
* { box-sizing: border-box; }
body { margin: 0; background: #000; font-family: "Noto Sans", "Noto Sans CJK SC", sans-serif; }
button, input, select { font: inherit; color: inherit; margin: 0; padding: 0; border: 0; background: none; }
h1, h2, h3, p { margin: 0; font-weight: 400; }
a { color: inherit; text-decoration: none; }
i { font-style: normal; }
svg { display: block; flex: none; }
.defs { position: absolute; width: 0; height: 0; }

.desktop { position: relative; display: flex; min-height: 100vh; overflow: hidden; }
.app { flex: 1; min-width: 0; display: flex; flex-direction: column; }
.edge { width: 8px; border-right: 1px solid #35434f; background: linear-gradient(#c8d4dc, #a8dfe8 5%, #a9e3ea 10%, #5d8794 20%, #9fc4cf 40%, #6c8fa0 80%, #46606f 94%, #f4fbfc 96%, #a8dfe8); }

/* header */
.top { display: flex; height: 54px; background: #9cdbdb; border-right: 2px solid #cdeeee; }
.menubar { flex: 1; display: flex; align-items: center; gap: 18px; margin-bottom: 2px; padding: 0 11px 0 8px; border-top: 2px solid #cdeeee; border-bottom: 2px solid #527e80; border-right: 2px solid #527e80; font: 700 14px/20px "Liberation Serif", serif; }
.menubar u { text-underline-offset: 3px; }
.menu-help { margin-left: auto; }
.brand { display: flex; width: 411px; margin-left: 3px; border-left: 2px solid #527e80; border-top: 1px solid #527e80; border-bottom: 1px solid #cdeeee; align-items: flex-start; }
.logo-text { font: italic 700 32px "Liberation Sans", sans-serif; fill: #000080; }
.product { display: flex; flex-direction: column; align-items: center; width: 138px; font-family: "Liberation Serif", serif; }
.product strong { font-size: 24px; line-height: 29px; white-space: nowrap; }
.product em { font-weight: 700; font-size: 14px; line-height: 20px; }
.clock { width: 103px; text-align: center; font: italic 700 15px/15px "Liberation Mono", monospace; white-space: nowrap; padding-top: 2px; }

/* work area */
.work { flex: 1; display: flex; background: #000; }
.side { width: 147px; display: flex; flex-direction: column; background: #55d0b0; padding: 2px 2px 2px 0; margin-bottom: 2px; border-top: 1px solid #2c6f60; }
.job { height: 19px; width: 145px; border: 1px solid #000; border-left: 0; background: #9cdbdb; font: 700 15px/17px "Liberation Mono", monospace; white-space: nowrap; text-indent: -1px; overflow: hidden; }
.matrix { height: 27px; width: 145px; margin: 2px 0 4px; border: 1px solid #000; border-left: 0; padding: 2px 3px 2px 0; }
.matrix button { display: block; width: 100%; height: 100%; padding-left: 1px; text-align: left; background: #9cdbdb; border: 2px solid; border-color: #c9f2f2 #527e80 #527e80 #9cdbdb; border-left: 0; font: 700 15px/17px "Liberation Mono", monospace; white-space: nowrap; }
.list { flex: 1; display: flex; justify-content: space-between; border-top: 1px solid #2c6f60; }
.layers { width: 127px; display: flex; flex-direction: column; gap: 3px; padding-right: 11px; border-bottom: 4px solid #b0ecdc; background: linear-gradient(90deg, #55d0b0 118px, #000 118px, #000 119px, #b0ecdc 119px, #b0ecdc 121px, #55d0b0 121px, #55d0b0 124px, #b0ecdc 124px); }
.group { display: flex; flex-direction: column; gap: 2px; padding: 2px 2px 2px 1px; background: #000; }
.layer { display: flex; height: 14px; font: 700 12px/14px "Liberation Mono", monospace; background: #9cdbdb; white-space: nowrap; align-items: center; }
.layer input { appearance: none; width: 14px; height: 14px; background: #fff; border: 2px solid #fff; outline: 2px solid #000; outline-offset: -4px; flex: none; }
.layer input:checked { border-color: #0a1890; outline-color: #0a1890; }
.layer i { width: 18px; height: 14px; border: solid #000; border-width: 0 2px; background: #000; flex: none; }
.layer i.red { background: #f00; }
.layer i.blue { background: #0014ff; }
.layer span { flex: 1; padding-left: 1px; }
.layer svg { width: 8px; height: 8px; margin-right: 2px; }
.white { background: #fff; }
.green { background: #05a57c; }
.orange { background: #fdc64e; }
.gold { background: #d6a902; }
.steel { background: #9bb3bd; }
.grey { background: #d8d8d8; }
.mscroll { width: 15px; display: flex; flex-direction: column; align-items: center; background: #4aa893; border: 2px solid; border-color: #2c6f60 #b0ecdc #b0ecdc #2c6f60; }
.mthumb { flex: 1; align-self: stretch; background: #55d0b0; border: 2px solid; border-color: #b0ecdc #2c6f60 #2c6f60 #b0ecdc; }
.selected { height: 19px; margin-top: 4px; border: 1px solid #000; border-left: 0; background: #fdc64e; font: 700 12px/17px "Liberation Mono", monospace; }
.canvas { flex: 1; min-width: 0; height: auto; align-self: stretch; }
.cut text { font: 13px "Liberation Sans", sans-serif; fill: #1020d8; stroke: none; }

.right { width: 163px; display: flex; flex-direction: column; border-right: 2px solid #a8e8d8; }
.tools { display: grid; grid-template-columns: repeat(4, 38px); gap: 2px; padding: 2px 0 2px 2px; border-top: 1px solid #2c6f60; border-bottom: 1px solid #a8e8d8; }
.plain { border-bottom: 2px solid #527e80; }
.tools button { height: 38px; background: #9cdbdb; border: 3px solid; border-color: #c4efef #6b9f9f #6b9f9f #c4efef; display: grid; place-items: center; }
.plain button { background: #cdcdcd; border-color: #ededed #8c8c8c #8c8c8c #ededed; }
.plain .paper { background: #fff; border-color: #fff #ccc #ccc #fff; }
.plain .amber { background: #fdc04a; border-color: #ffe0a0 #b07c20 #b07c20 #ffe0a0; }
.tools .crimson { border-color: #c83030 #8a1414 #8a1414 #c83030; }
.tools svg { width: 30px; height: 30px; border: 1px solid #000; }
.r90 { transform: rotate(90deg); }
.r180 { transform: rotate(180deg); }
.r270 { transform: rotate(270deg); }
.mini { flex: 1; width: 100%; min-height: 0; }
.coords { display: block; height: 44px; margin-bottom: 2px; padding: 6px 0 0 6px; background: #55d0b0; border: 1px solid #2c6f60; border-bottom: 2px solid #b0ecdc; font: 700 15px/15px "Liberation Mono", monospace; white-space: nowrap; }

/* prompt and status */
.prompt { display: flex; height: 33px; padding-bottom: 1px; gap: 2px; background: #000; border-right: 2px solid #a8e8d8; }
.pbtn { display: grid; place-items: center; width: 30px; background: #feffcc; border: 2px solid; border-color: #feffcc #c8c8a0 #c8c8a0 #feffcc; outline: 1px solid #a8a890; outline-offset: -3px; }
.pbtn:first-child { width: 24px; }
.teal { width: 30px; background: #d8ddb4; border-color: #55b8a0; outline-color: #8fa890; }
.xy { width: 44px; padding-left: 2px; background: #feffcc; font: 700 12px/32px "Liberation Mono", monospace; }
.xyin { width: 171px; background: #feffcc; border: 2px solid; border-color: #a8a890 #d8d8b0 #d8d8b0 #a8a890; outline: 1px solid #feffcc; font: 700 12px/20px "Liberation Mono", monospace; }
.msg { flex: 1; background: #feffcc; padding-left: 3px; font: 700 12px/32px "Liberation Mono", monospace; }
.unitbox { width: 77px; padding: 2px 2px 2px 6px; background: #55d0b0; }
.unit { display: flex; justify-content: space-between; align-items: center; width: 100%; height: 100%; padding: 0 6px 0 4px; border: 2px solid; border-color: #b0ecdc #2c6f60 #2c6f60 #b0ecdc; font: 700 15px/20px "Liberation Mono", monospace; }
.unit i { width: 12px; height: 7px; border: 2px solid; border-color: #b0ecdc #2c6f60 #2c6f60 #b0ecdc; }
.status { height: 32px; padding-right: 6px; border-top: 4px solid #6f8f8f; border-right: 2px solid #cdeeee; background: linear-gradient(#000 1px, #dff 1px, #dff 4px, #b5ffff 4px, #b5ffff 21px, #5f9f9f 21px, #5f9f9f 23px, #b5ffff 23px, #b5ffff 25px, #000 25px, #000 26px, #b5ffff 26px); text-align: center; font: 700 12px/24px "Liberation Mono", monospace; }

/* popview window */
.popview { position: absolute; left: 318px; top: 563px; width: 440px; height: 327px; border: 1px solid #969ba0; border-radius: 6px; background: linear-gradient(90deg, #4a4a4a, #101214 40%, #101214 60%, #4a4a4a) 0 0 / 100% 100px no-repeat #0a0c0e; padding: 0 5px 5px; display: flex; flex-direction: column; }
.popview header { display: flex; align-items: flex-start; height: 26px; }
.popview header > svg { margin: 6px 0 0 1px; }
.popview h2 { margin: 4px 0 0; padding: 0 5px; border-radius: 8px; background: #6a6c6e; box-shadow: 0 0 6px 2px #6a6c6e; font: 12px/18px "Open Sans", sans-serif; color: #000; }
.popview header button { margin-left: auto; width: 48px; height: 19px; display: grid; place-items: center; border: 1px solid #969ba0; border-top: 0; border-radius: 0 0 4px 4px; }
.pv-inner { flex: 1; display: flex; flex-direction: column; gap: 2px; border: 1px solid #969ba0; border-radius: 2px; background: #000; padding: 1px 1px 1px 1px; }
.pv-main { flex: 1; display: flex; }
.pv-canvas { flex: 1; min-width: 0; height: auto; align-self: stretch; border: solid; border-width: 3px; border-color: #33685c #b0ecdc #b0ecdc #33685c; }
.pv-tools { width: 35px; padding: 2px 0 0 1px; background: #000; display: flex; flex-direction: column; gap: 2px; border-bottom: 15px solid #55d0b0; }
.pv-tools button { height: 33px; display: grid; place-items: center; background: #9cdbdb; border: 2px solid #55c0a8; box-shadow: inset 2px 2px #c4efef, inset -2px -2px #4f8888; }
.pv-tools svg { width: 21px; height: 21px; border: 1px solid #000; }
.pv-close { height: 26px; background: #9cdbdb; border: 2px solid #55c0a8; box-shadow: inset 2px 2px #c4efef, inset -2px -2px #4f8888; font: 700 15px/20px "Liberation Mono", monospace; }

/* spreadsheet window */
.excel { position: absolute; left: 959px; top: 70px; width: 797px; height: 873px; display: flex; flex-direction: column; padding: 0 6px 6px; border: 1px solid #b4b8bc; border-radius: 7px 7px 6px 6px; background: linear-gradient(90deg, #5e6266, #07090c 30%, #07090c 60%, #2b3036 80%, #6a6e72) 0 0 / 100% 230px no-repeat #0b1016; box-shadow: 2px 4px 12px #000; color: #1e3d7c; }
.orb { position: absolute; left: 8px; top: 6px; }
.x-title { display: flex; height: 27px; padding-left: 42px; }
.qat { display: grid; place-items: center; width: 34px; height: 23px; margin-top: 3px; border-radius: 0 12px 12px 0; background: #4d5156; }
.qat-more { margin: 11px 0 0 8px; }
.x-title h1 { flex: 1; display: flex; justify-content: center; align-items: center; white-space: nowrap; font: 12px/18px "Noto Sans", "Noto Sans CJK SC", sans-serif; color: #000; }
.x-title h1 span { padding: 0 4px; border-radius: 8px; background: #6e7072; box-shadow: 0 0 6px 2px #6e7072; line-height: 16px; }
.wbtns { display: flex; width: 103px; height: 19px; border: 1px solid #c0c4c8; border-top: 0; border-radius: 0 0 5px 5px; overflow: hidden; }
.wbtns button { width: 27px; display: grid; place-items: center; background: linear-gradient(#8e9195, #45494e 50%, #2b2e33 50%, #555); border-right: 1px solid #aaa; }
.wbtns .close { flex: 1; border: 0; background: linear-gradient(#d09080, #b8432c 50%, #8f1c08 50%, #c0482c); }
.x-body { flex: 1; min-height: 0; display: flex; flex-direction: column; background: #bfdbff; border-top: 1px solid #222; }
.tabs { display: flex; gap: 7px; height: 27px; padding: 1px 0 0 48px; font: 12px/24px "Noto Sans CJK SC", sans-serif; }
.tabs button { padding: 0 11px; height: 26px; white-space: nowrap; }
.tabs .on { background: #e6effb; border: 1px solid #9dbfe8; border-bottom: 0; border-radius: 4px 4px 0 0; padding: 0 10px; }
.mdi { margin-left: auto; display: flex; gap: 14px; align-items: center; padding-right: 6px; }
.mdi svg:first-child { margin-right: -4px; }

.ribbon { display: flex; gap: 4px; height: 106px; padding: 2px 3px 3px 2px; margin-right: 1px; border: 1px solid #9dbfe8; border-radius: 3px; background: linear-gradient(#dfe9f6, #ccdcef 20%, #c5d7ee 30%, #d8e8fa 90%, #e4f2fc); border-top-color: #b4d0f0; font: 12px/16px "Noto Sans CJK SC", sans-serif; }
.rg { display: flex; flex-direction: column; border: 1px solid #a9c5e6; border-radius: 3px; background: linear-gradient(#dde8f5, #cddcf0 25%, #c6d8ef 35%, #d9e8f9); }
.rg h3 { height: 19px; font-size: 12px; line-height: 18px; text-align: center; background: #c1d8f1; color: #3c69ae; display: flex; justify-content: center; }
.rg h3 b { width: 7px; height: 7px; border: solid #6a8cc0; border-width: 1px 0 0 1px; margin: 5px -6px 0 14px; box-shadow: 2px 2px 0 -1px #4a6ca8; }
.rb { flex: 1; display: flex; padding: 3px 3px 0; }
.clip { width: 72px; }
.font { width: 151px; }
.align { width: 112px; }
.num { width: 88px; }
.styles { width: 116px; }
.cells { width: 68px; }
.edit { width: 124px; }
.col { flex-direction: column; gap: 3px; }
.caret { display: block; width: 0; height: 0; border: 3px solid transparent; border-top-color: #5578ae; border-bottom: 0; flex: none; }
.big { width: 42px; display: flex; flex-direction: column; align-items: center; gap: 4px; }
.big .caret { margin-top: 2px; }
.clip .big svg { margin-left: 4px; }
.stack { display: flex; flex-direction: column; gap: 6px; padding: 2px 0 0 5px; }
.row { display: flex; justify-content: space-between; height: 22px; }
.row:first-child { height: 24px; }
.start { justify-content: flex-start; gap: 3px; }
.seg { display: flex; border: 1px solid #9ab6dc; border-radius: 2px; background: linear-gradient(#dfe9f6, #c8d9f0); }
.seg button { min-width: 20px; display: grid; place-items: center; color: #222; }
.font .seg button { min-width: 21px; }
.seg .mini-caret, .font .seg .mini-caret { min-width: 12px; }
.s2 { margin-right: 10px; }
.serif { font: 15px/18px "Liberation Serif", serif; }
.serif span { display: flex; }
.tick { width: 0; height: 0; border: 2px solid transparent; border-top-color: #2b56b0; border-bottom: 0; margin-top: 3px; }
.tick.up { border: 2px solid transparent; border-bottom-color: #2b56b0; border-top: 0; }
.big-a { font-size: 18px; }
.seg .under { border-bottom: 4px solid #e00010; line-height: 13px; font-weight: 700; color: #2c4c88; }
.seg .wen { display: flex; flex-direction: column; align-items: center; justify-content: center; color: #2c4ca8; }
.wen small { font: 9px/9px "Liberation Sans", sans-serif; color: #222; }
.wen span { font: 10px/11px "Noto Sans CJK SC", sans-serif; }
.combo { display: flex; align-items: center; background: #e9f1fb; border: 1px solid #a9c5e6; padding-right: 4px; color: #111; }
.combo select { flex: 1; min-width: 0; appearance: none; padding-left: 2px; font: 12px/18px "Open Sans", "Noto Sans CJK SC", sans-serif; overflow: hidden; }
.c1 { width: 96px; }
.c2 { width: 47px; }
.c3 { width: 80px; }
.al { width: 16px; height: 16px; fill: none; stroke: #111; shape-rendering: crispEdges; }
.align .seg button { min-width: 22px; }
.align .seg .mini-caret { min-width: 12px; }
.seg .hot { background: linear-gradient(#fcd9a0, #fdb650 50%, #fee29a); }
.seg .hot2 { background: linear-gradient(#e8c48c, #f5bc68 50%, #fde0a0); }
.seg .dec { display: flex; flex-direction: column; align-items: flex-end; justify-content: center; padding: 0 2px; font: 9px/10px "Liberation Sans", sans-serif; }
.lines { flex-direction: column; gap: 6px; }
.edit .lines { display: flex; }
.lines button { display: flex; align-items: center; gap: 3px; height: 16px; white-space: nowrap; }
.lines .caret { margin-left: 4px; }
.edit .lines button { width: 32px; gap: 0; }
.edit .rb { padding-left: 6px; }
.two { gap: 0; margin-top: 2px; }
.two span { display: flex; align-items: center; gap: 3px; }
.two svg { margin-bottom: 6px; }

.warn { display: flex; justify-content: space-between; margin: 6px 5px 5px 2px; }
.warn-box { flex: 1; height: 33px; margin-right: 8px; padding-left: 3px; display: flex; align-items: center; border: 1px solid #a3c0e4; background: linear-gradient(#fff, #e8f2fd); font: 12px/18px "Noto Sans CJK SC", sans-serif; }
.warn-box strong { margin: 0 12px 0 10px; }
.warn-box button { width: 70px; height: 21px; margin-left: 11px; border: 1px solid #8fb0da; background: #fff; }
.warn > svg { margin-top: 3px; }

.fbar { display: flex; height: 20px; border-top: 1px solid #6b8fbf; border-bottom: 1px solid #6b8fbf; color: #000; margin-bottom: 4px; }
.name { width: 158px; padding-left: 58px; background: #fff; font: 15px/18px "Liberation Serif", serif; display: flex; align-items: center; justify-content: space-between; }
.name i { border: 4px solid transparent; border-top-color: #000; border-bottom: 0; margin-right: 3px; }
.fx { display: flex; align-items: center; justify-content: space-between; width: 77px; padding: 0 6px 0 1px; border-radius: 9px 0 0 9px; margin-left: 2px; background: linear-gradient(#e8f1fc, #9dbde6); border-right: 1px solid #6b8fbf; }
.fx em { font: italic 700 15px/17px "Liberation Serif", serif; color: #444; }
.ftext { flex: 1; background: #fff; padding-left: 11px; font: 15px/18px "Liberation Serif", "Noto Sans CJK SC", serif; white-space: nowrap; overflow: hidden; }
.spin { width: 15px; background: #a9c4ea; display: flex; flex-direction: column; align-items: center; justify-content: center; gap: 2px; }
.spin i { border: 5px solid transparent; border-top-color: #4d6ea8; border-bottom: 0; }
.spin .up { border: 5px solid transparent; border-bottom-color: #4d6ea8; border-top: 0; }
.expand { width: 15px; background: #dbe7f8; display: grid; place-items: center; }

.sheet { flex: 1; min-height: 0; display: flex; overflow: hidden; }
.gridwrap { position: relative; flex: 1; min-width: 0; background: #fff; overflow: hidden; }
.grid { width: 100%; table-layout: fixed; border-collapse: separate; border-spacing: 0; color: #000; }
.k0 { width: 34px; }
.k1 { width: 58px; }
.k2 { width: 37px; }
.k3 { width: 195px; }
.k4 { width: 88px; }
.k5 { width: 103px; }
.k6 { width: 89px; }
.k7 { width: 58px; }
.k8 { width: 87px; }
.grid th, .grid td { padding: 0; }
.grid th { font: 15px/16px "Liberation Serif", serif; color: #26415f; border-right: 1px solid #9eb6ce; border-bottom: 1px solid #9eb6ce; background: #e4ecf7; vertical-align: bottom; }
.grid thead th { height: 19px; background: linear-gradient(#f6f9fc, #d5dde9); vertical-align: middle; }
.grid thead .sel { background: linear-gradient(#f9d99f, #f1c15f); border-color: #e09345; color: #3a3a1c; }
.grid thead .corner { background: linear-gradient(135deg, #a9c4e9 60%, #e8f0fa 60%); }
.h34 { height: 34px; }
.h45 { height: 45px; }
.h55 { height: 55px; }
.grid td { border-bottom: 1px solid #000; }
.grid td.n { border-right: 1px solid #000; border-left: 1px solid #000; text-align: center; font: 600 16px/18px "Noto Sans", sans-serif; }
.grid td.v { border-right: 1px solid #000; }
.grid td.pend { vertical-align: top; }
.grid td.cam.v { border-right: 0; }
.pend div { height: 76px; margin-top: -4px; font: 700 17px/19px "Noto Sans CJK SC", sans-serif; color: #0000d8; text-align: center; }
.flow { font: 16px/23px "Noto Sans CJK SC", sans-serif; text-align: center; }
.cam { font: 16px/24px "Noto Sans CJK SC", sans-serif; text-align: center; }
.cam span { font: italic 500 16px/24px "Noto Sans", sans-serif; }
.t { font: 13px/16px "Liberation Serif", "Noto Sans CJK SC", serif; white-space: nowrap; }
.grid td.t { padding-left: 2px; }
.yellow { background: #ff0; }
.mark { position: absolute; left: 105px; top: 168px; width: 255px; height: 38px; border: 2px solid #c81818; box-shadow: 2px 2px 4px #888, inset 2px 2px 4px #aaa; }
.vs { width: 16px; display: flex; flex-direction: column; align-items: center; background: #7897c4; border-left: 1px solid #a9c9f2; padding-bottom: 6px; }
.split { width: 13px; height: 7px; background: #fff; border: 1px solid #4f6f9f; margin-top: 2px; }
.vs i { border: 5px solid transparent; margin: 6px 0 20px; }
.vs .up { border-bottom-color: #3b5990; border-top: 0; }
.vs .down { margin: auto 0 0; border-top-color: #3b5990; border-bottom: 0; }
.vthumb { width: 14px; height: 99px; border: 1px solid #56759f; background: repeating-linear-gradient(#6f8098 0 1px, #e8eef6 1px 2px) center / 8px 7px no-repeat, linear-gradient(90deg, #f0f4fa, #cad5e4); }

.sheettabs { display: flex; height: 17px; background: #b8d1f2; border-top: 1px solid #8fb0dc; }
.navs { width: 63px; padding: 3px 0 0 2px; background: #dce8f8; border-right: 1px solid #8fb0dc; }
.tabstrip { width: 400px; display: flex; overflow: hidden; font: 12px/17px "Liberation Mono", "Noto Sans CJK SC", monospace; }
.tabstrip a { flex: none; width: 79px; padding-left: 8px; text-align: center; background: linear-gradient(to bottom right, #fff0 46%, #7f9fd0 47%, #fff 50%, #fff0 54%) 0 0 / 14px 16px no-repeat, linear-gradient(#c8dcf6, #a8c8f0); }
.tabstrip .cur { width: 44px; padding: 0; background: #fff; font: 14px/17px "Noto Sans CJK SC", sans-serif; }
.tabstrip a:last-child { text-align: left; padding-left: 12px; }
.hs { flex: 1; display: flex; align-items: center; background: #7897c4; }
.hs b { width: 6px; height: 13px; border: 1px solid #8fa8cc; background: #fff; }
.hs i { border: 5px solid transparent; }
.hs .lt { border-right-color: #3b5990; border-left: 0; margin: 0 6px; }
.hs .rt { border-left-color: #3b5990; border-right: 0; margin: 0 8px; }
.hs span { flex: 1; }
.hs b:last-child { margin-right: 16px; }
.hthumb { width: 127px; height: 15px; border: 1px solid #56759f; background: repeating-linear-gradient(90deg, #6f8098 0 1px, #e8eef6 1px 2px) center / 8px 7px no-repeat, linear-gradient(#f0f4fa, #cad5e4); }
.xstatus { display: flex; align-items: center; height: 22px; padding-right: 0; background: linear-gradient(#dbe8fa, #b8d0f2 40%, #cfe1fa); border-top: 1px solid #6b8fbf; font: 12px/20px "Noto Sans CJK SC", sans-serif; }
.ready { width: 40px; padding-left: 7px; border-right: 1px solid #8fb0dc; margin-right: auto; }
.views { display: flex; border: 1px solid #a8c4ec; margin: 0 9px 0 0; }
.xstatus .views, .pct, .zoom, .grip { flex: none; }
.views button { width: 18px; height: 17px; display: grid; place-items: center; background: #b0cbf0; }
.views .on { background: #fbd070; }
.pct { width: 40px; font: 12px/20px "Noto Sans", sans-serif; }
.zoom { margin-right: 6px; }
```
